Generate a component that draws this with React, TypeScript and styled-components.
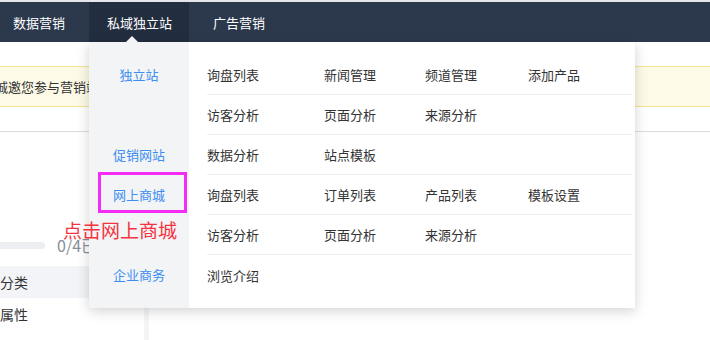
import styled, { createGlobalStyle } from 'styled-components';

const GlobalStyle = createGlobalStyle`
  html, body {
    margin: 0;
    padding: 0;
    background: #fff;
    font-family: "Noto Sans CJK SC", "Noto Sans", sans-serif;
    overflow: hidden;
  }
`;

const StyledPage = styled.div`
  position: relative;
  width: 710px;
  height: 340px;
  overflow: hidden;
`;

const StyledNav = styled.nav`
  display: flex;
  height: 40px;
  border-top: 2px solid #e4e6ea;
  background: #2c394d;
`;

const StyledTab = styled.div<{ $active?: boolean; $width: number; $pad: number }>`
  display: flex;
  align-items: center;
  width: ${(p) => p.$width}px;
  padding-left: ${(p) => p.$pad}px;
  box-sizing: border-box;
  background: ${(p) => (p.$active ? '#222d3f' : 'transparent')};
  color: #fff;
  font-size: 13px;
`;

const StyledNotice = styled.div`
  margin-top: 24px;
  height: 39px;
  display: flex;
  align-items: center;
  background: #fdfae7;
  border-top: 1px solid #f6e48e;
  border-bottom: 1px solid #f6e48e;
  font-size: 13px;
  color: #333;
  text-indent: -5px;
  white-space: nowrap;
`;

const StyledBody = styled.div`
  margin-top: 24px;
  border-top: 1px solid #dcdcdc;
  display: flex;
`;

const StyledSidebar = styled.aside`
  width: 144px;
  height: 220px;
  border-right: 5px solid #f4f5f7;
  padding-top: 103px;
`;

const StyledProgress = styled.div`
  display: flex;
  align-items: center;
  gap: 12px;
  height: 20px;
  margin-bottom: 11px;
  color: #8a8f99;
  font-size: 16px;
`;

const StyledTrack = styled.div`
  width: 45px;
  height: 7px;
  border-radius: 0 4px 4px 0;
  background: #eceef2;
`;

const StyledSideItem = styled.div<{ $active?: boolean }>`
  height: 32px;
  display: flex;
  align-items: center;
  font-size: 14px;
  color: #333;
  background: ${(p) => (p.$active ? '#f2f4f8' : 'transparent')};
`;

const StyledDropdown = styled.div`
  position: absolute;
  left: 89px;
  top: 42px;
  width: 546px;
  padding: 13px 3px 13px 0;
  box-sizing: border-box;
  background: linear-gradient(to right, #f3f4f6 100px, #fff 100px);
  box-shadow: 0 3px 12px rgba(0, 0, 0, 0.18);

  &::before {
    content: '';
    position: absolute;
    left: 37px;
    top: -6px;
    border-left: 6px solid transparent;
    border-right: 6px solid transparent;
    border-bottom: 6px solid #f3f4f6;
  }
`;

const StyledGroup = styled.div`
  display: grid;
  grid-template-columns: 100px 1fr;
`;

const StyledGroupLabel = styled.div`
  height: 40px;
  line-height: 40px;
  text-align: center;
  font-size: 13px;
  color: #3d8ef0;
`;

const StyledRows = styled.div`
  margin-left: 18px;
`;

const StyledRow = styled.div<{ $last?: boolean }>`
  display: grid;
  grid-template-columns: 117px 101px 103px 1fr;
  align-items: center;
  height: 40px;
  box-sizing: border-box;
  border-bottom: ${(p) => (p.$last ? 'none' : '1px solid #f0f0f0')};
  font-size: 13px;
  color: #333;
`;

const StyledHighlight = styled.div`
  position: absolute;
  left: 98px;
  top: 172px;
  width: 89px;
  height: 41px;
  box-sizing: border-box;
  border: 3px solid #f52cf5;
`;

const StyledHint = styled.div`
  position: absolute;
  left: 63px;
  top: 216px;
  font-size: 19px;
  line-height: 28px;
  color: #f5333f;
  white-space: nowrap;
`;

const groups = [
  {
    label: '独立站',
    rows: [
      ['询盘列表', '新闻管理', '频道管理', '添加产品'],
      ['访客分析', '页面分析', '来源分析']
    ]
  },
  { label: '促销网站', rows: [['数据分析', '站点模板']] },
  {
    label: '网上商城',
    rows: [
      ['询盘列表', '订单列表', '产品列表', '模板设置'],
      ['访客分析', '页面分析', '来源分析']
    ]
  },
  { label: '企业商务', rows: [['浏览介绍']] }
];

export default function App() {
  return (
    <StyledPage>
      <GlobalStyle />
      <StyledNav>
        <StyledTab $width={89} $pad={13}>
          数据营销
        </StyledTab>
        <StyledTab $active $width={100} $pad={18}>
          私域独立站
        </StyledTab>
        <StyledTab $width={100} $pad={24}>
          广告营销
        </StyledTab>
      </StyledNav>
      <StyledNotice>诚邀您参与营销站点活动</StyledNotice>
      <StyledBody>
        <StyledSidebar>
          <StyledProgress>
            <StyledTrack />
            0/4已
          </StyledProgress>
          <StyledSideItem $active>分类</StyledSideItem>
          <StyledSideItem>属性</StyledSideItem>
          <StyledSideItem>规格</StyledSideItem>
        </StyledSidebar>
      </StyledBody>
      <StyledDropdown>
        {groups.map((g, gi) => (
          <StyledGroup key={g.label}>
            <StyledGroupLabel>{g.label}</StyledGroupLabel>
            <StyledRows>
              {g.rows.map((r, ri) => (
                <StyledRow key={ri} $last={gi === groups.length - 1 && ri === g.rows.length - 1}>
                  {r.map((t) => (
                    <span key={t}>{t}</span>
                  ))}
                </StyledRow>
              ))}
            </StyledRows>
          </StyledGroup>
        ))}
      </StyledDropdown>
      <StyledHighlight />
      <StyledHint>点击网上商城</StyledHint>
    </StyledPage>
  );
}
